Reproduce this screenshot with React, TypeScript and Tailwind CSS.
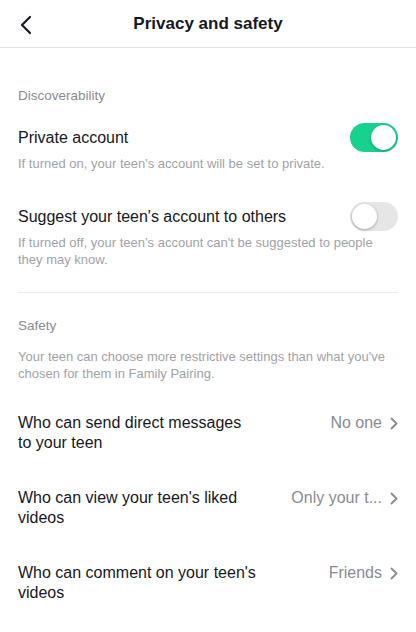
const Toggle = ({ on }: { on: boolean }) => (
  <div
    className={`flex h-[29px] w-[48px] shrink-0 items-center rounded-full px-[2px] ${
      on ? "justify-end bg-[#17d28f]" : "justify-start bg-[#e6e6e7]"
    }`}
  >
    <div className="h-[25px] w-[25px] rounded-full bg-white shadow-[0_1px_3px_rgba(0,0,0,0.3)]" />
  </div>
);

const Chevron = () => (
  <svg width="8" height="13" viewBox="0 0 8 13" fill="none" className="shrink-0">
    <path d="M1.5 1.5L6.5 6.5L1.5 11.5" stroke="#8a8b91" strokeWidth="1.8" strokeLinecap="round" strokeLinejoin="round" />
  </svg>
);

const LinkRow = ({ lines, value, first }: { lines: string[]; value: string; first?: boolean }) => (
  <div className={`flex items-start gap-[8px] ${first ? "mt-[31px]" : "mt-[35px]"}`}>
    <div className="w-[264px] text-[16px] leading-[20px] text-[#161823]">
      {lines.map((l) => (
        <div key={l}>{l}</div>
      ))}
    </div>
    <div className="flex h-[20px] min-w-0 flex-1 items-center justify-end gap-[8px]">
      <span className="whitespace-nowrap text-[16px] leading-[20px] text-[#8a8b91]">{value}</span>
      <Chevron />
    </div>
  </div>
);

export default function App() {
  return (
    <div className="min-h-[632px] w-full bg-white font-['Liberation_Sans',Arial,sans-serif] antialiased">
      {/* Header */}
      <div className="relative flex h-[48px] items-center justify-center border-b border-[#e3e3e4]">
        <button className="absolute left-[17px] top-[13px] p-[2px]">
          <svg width="14" height="20" viewBox="0 0 14 20" fill="none">
            <path d="M11 2L3 10L11 18" stroke="#161823" strokeWidth="2.2" strokeLinecap="round" strokeLinejoin="round" />
          </svg>
        </button>
        <h1 className="text-[17px] font-bold leading-[24px] text-[#161823]">Privacy and safety</h1>
      </div>

      <div className="px-[18px]">
        {/* Discoverability */}
        <div className="mt-[39px] text-[13.5px] leading-[18px] text-[#8a8b91]">Discoverability</div>

        <div className="mt-[18px] flex h-[29px] items-center justify-between">
          <span className="text-[16px] leading-[20px] text-[#161823]">Private account</span>
          <Toggle on />
        </div>
        <p className="mt-[3px] text-[13px] leading-[17px] text-[#a1a2a7]">
          If turned on, your teen's account will be set to private.
        </p>

        <div className="mt-[30px] flex h-[29px] items-center justify-between">
          <span className="text-[16px] leading-[20px] text-[#161823]">Suggest your teen's account to others</span>
          <Toggle on={false} />
        </div>
        <p className="mt-[3px] text-[13px] leading-[17px] text-[#a1a2a7]">
          If turned off, your teen’s account can't be suggested to people they may know.
        </p>

        <div className="mt-[24px] border-t border-[#ececed]" />

        {/* Safety */}
        <div className="mt-[24px] text-[13.5px] leading-[18px] text-[#8a8b91]">Safety</div>
        <p className="mt-[13px] text-[13px] leading-[17px] text-[#a1a2a7]">
          Your teen can choose more restrictive settings than what you've chosen for them in Family Pairing.
        </p>

        <LinkRow first lines={["Who can send direct messages", "to your teen"]} value="No one" />
        <LinkRow lines={["Who can view your teen's liked", "videos"]} value="Only your t..." />
        <LinkRow lines={["Who can comment on your teen's", "videos"]} value="Friends" />
      </div>
    </div>
  );
}
